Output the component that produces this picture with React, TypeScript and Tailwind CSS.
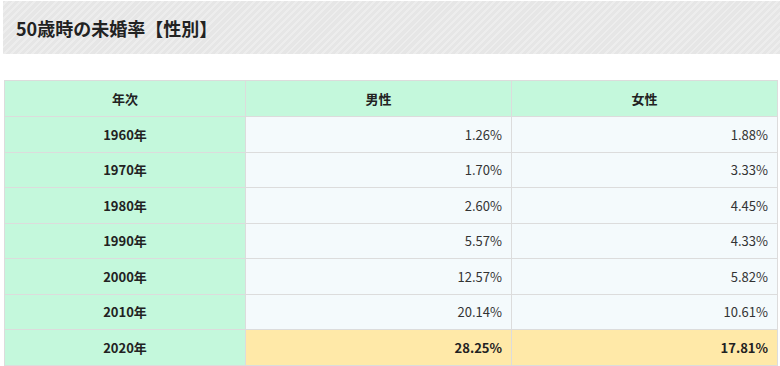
import React from "react";

const rows: [string, string, string][] = [
  ["1960年", "1.26%", "1.88%"],
  ["1970年", "1.70%", "3.33%"],
  ["1980年", "2.60%", "4.45%"],
  ["1990年", "5.57%", "4.33%"],
  ["2000年", "12.57%", "5.82%"],
  ["2010年", "20.14%", "10.61%"],
];

export default function App() {
  return (
    <div
      className="w-[780px] h-[366px] bg-white overflow-hidden text-[#333]"
      style={{ fontFamily: '"Noto Sans CJK JP", "Noto Sans", sans-serif' }}
    >
      <div className="ml-[3px] mt-[1px] h-[53px] flex items-center pl-[13px] bg-[repeating-linear-gradient(-45deg,#e6e6e6_0px,#e6e6e6_3px,#ededed_3px,#ededed_5px)]">
        <h2 className="text-[18px] font-bold text-[#222] leading-none">50歳時の未婚率【性別】</h2>
      </div>
      <table className="ml-[4px] mt-[26px] w-[773px] border-collapse text-[13px] table-fixed">
        <colgroup>
          <col className="w-[241px]" />
          <col className="w-[266px]" />
          <col className="w-[266px]" />
        </colgroup>
        <thead>
          <tr className="h-[36px]">
            <th className="bg-[#c4f8dc] border border-[#dcdcdc] font-bold text-[#222]">年次</th>
            <th className="bg-[#c4f8dc] border border-[#dcdcdc] font-bold text-[#222]">男性</th>
            <th className="bg-[#c4f8dc] border border-[#dcdcdc] font-bold text-[#222]">女性</th>
          </tr>
        </thead>
        <tbody>
          {rows.map((r) => (
            <tr key={r[0]} className="h-[35.5px]">
              <td className="bg-[#c4f8dc] border border-[#dcdcdc] text-center font-bold text-[#222]">{r[0]}</td>
              <td className="bg-[#f4fafc] border border-[#dcdcdc] text-right pr-[9px]">{r[1]}</td>
              <td className="bg-[#f4fafc] border border-[#dcdcdc] text-right pr-[9px]">{r[2]}</td>
            </tr>
          ))}
          <tr className="h-[35.5px]">
            <td className="bg-[#c4f8dc] border border-[#dcdcdc] text-center font-bold text-[#222]">2020年</td>
            <td className="bg-[#ffe9a8] border border-[#dcdcdc] text-right pr-[9px] font-bold text-[#222]">28.25%</td>
            <td className="bg-[#ffe9a8] border border-[#dcdcdc] text-right pr-[9px] font-bold text-[#222]">17.81%</td>
          </tr>
        </tbody>
      </table>
    </div>
  );
}
